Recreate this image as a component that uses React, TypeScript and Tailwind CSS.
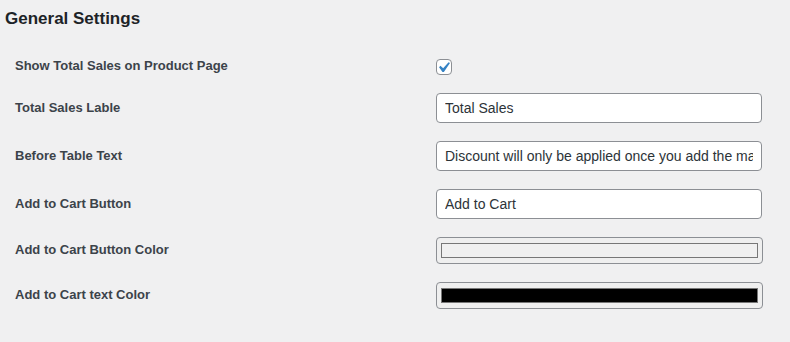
const font = { fontFamily: '"Liberation Sans", Arial, sans-serif' };

function Label({ children, raise }: { children: React.ReactNode; raise?: boolean }) {
  return (
    <div className={"w-[421px] shrink-0 text-[13px] font-bold leading-[17px] text-[#3c434a] " + (raise ? "mb-[3px]" : "mb-[2px]")}>
      {children}
    </div>
  );
}

function TextField({ value }: { value: string }) {
  return (
    <input
      readOnly
      value={value}
      className="h-[30px] w-[326px] rounded-[4px] border border-[#8c8f94] bg-white px-2 text-[14px] text-[#2c3338] outline-none"
    />
  );
}

function ColorField({ swatch }: { swatch: string }) {
  return (
    <div className="flex h-[27px] w-[327px] items-center rounded-[4px] border border-[#8c8f94] bg-[#efefef] pl-[4px] pr-[4px]">
      <div className={"h-[15px] w-[317px] border border-[#777777] " + swatch} />
    </div>
  );
}

export default function App() {
  return (
    <div className="min-h-[342px] w-[790px] bg-[#f0f0f1]" style={font}>
      <h2 className="pl-[5px] pt-2 text-[17px] font-bold leading-[22px] text-[#1d2327]">General Settings</h2>

      <div className="mt-[20px] pl-[15px]">
        <div className="flex h-[34px] items-center">
          <Label raise>Show Total Sales on Product Page</Label>
          <div className="relative h-4 w-4 rounded-[4px] border border-[#8c8f94] bg-white">
            <svg viewBox="0 0 20 20" width="21" height="21" className="absolute -left-[4px] -top-[3px]">
              <path d="M14.83 4.89l1.34.94-5.81 8.38H9.02L5.78 9.67l1.34-1.25 2.55 2.38z" fill="#3582c4" />
            </svg>
          </div>
        </div>

        <div className="flex items-center py-[9px]">
          <Label>Total Sales Lable</Label>
          <TextField value="Total Sales" />
        </div>

        <div className="flex items-center py-[9px]">
          <Label>Before Table Text</Label>
          <TextField value="Discount will only be applied once you add the max quantity" />
        </div>

        <div className="flex items-center py-[9px]">
          <Label>Add to Cart Button</Label>
          <TextField value="Add to Cart" />
        </div>

        <div className="flex items-center py-[9px]">
          <Label>Add to Cart Button Color</Label>
          <ColorField swatch="bg-[#f0f0f0]" />
        </div>

        <div className="flex items-center py-[9px]">
          <Label>Add to Cart text Color</Label>
          <ColorField swatch="bg-black" />
        </div>
      </div>
    </div>
  );
}
